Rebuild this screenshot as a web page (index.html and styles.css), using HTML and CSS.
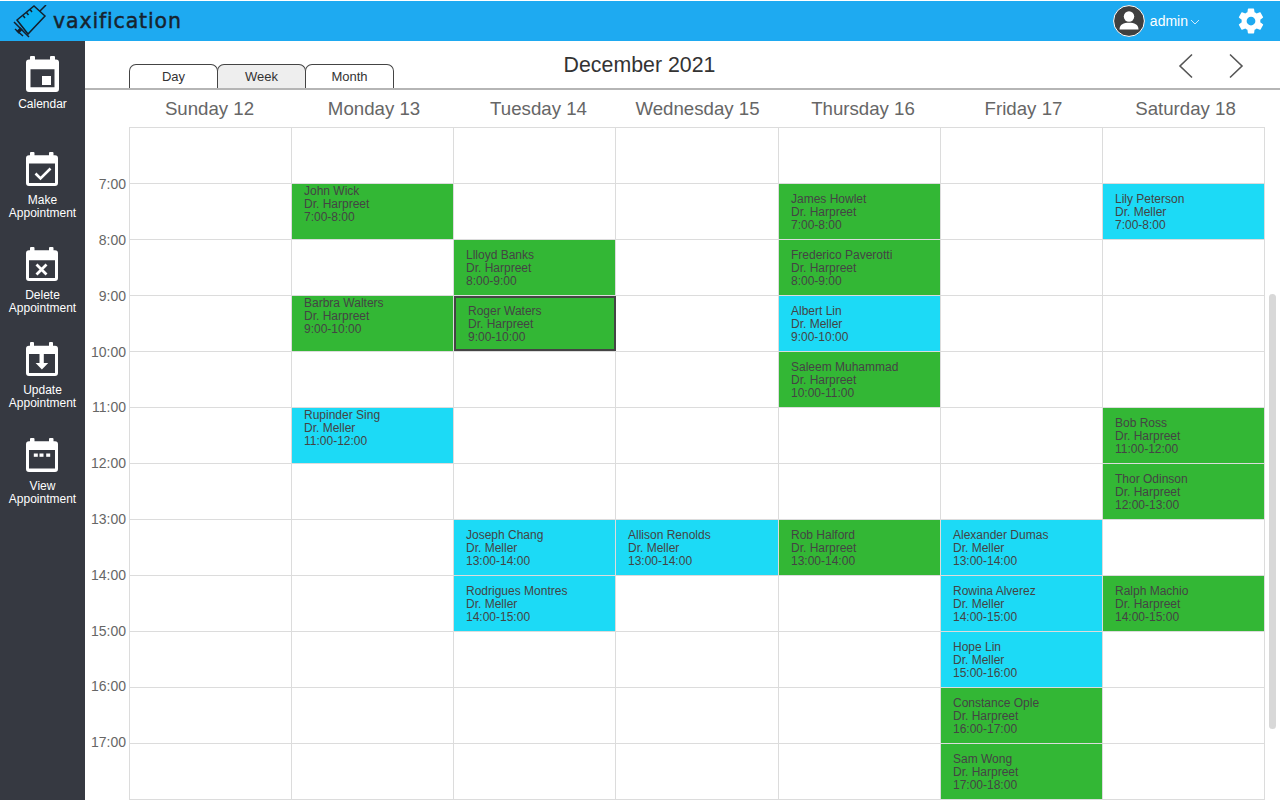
FILE: index.html
```html
<!DOCTYPE html>
<html lang="en">
<head>
<meta charset="utf-8">
<title>vaxification</title>
<link rel="stylesheet" href="styles.css">
</head>
<body>
<header class="topbar">
  <div class="brand">
    <svg class="logo" viewBox="0 0 34 33" width="34" height="33">
      <path d="M4 15 L21 1 L32 11 L15 29 Z" fill="#0bb0f2" stroke="#14202c" stroke-width="1.500" stroke-linejoin="miter"/>
      <path d="M1 17 L16 32 M2 24 L10 31 M27 6 L33 0 M17 4.500l2 2.500M13.500 7.500l2 2.500M10 10.500l2 2.500" fill="none" stroke="#14202c" stroke-width="1.500"/>
      <path d="M8.500 23.500L4.500 27.500" fill="none" stroke="#14202c" stroke-width="3.200"/>
    </svg>
    <span class="brand-name">vaxification</span>
  </div>
  <div class="user">
    <svg class="avatar" viewBox="0 0 32 32" width="32" height="32">
      <circle cx="16" cy="16" r="15.400" fill="#3f3f3f" stroke="#fff" stroke-width="1"/>
      <circle cx="16" cy="11.500" r="5.200" fill="#fff"/>
      <path d="M6.500 24.500c0-5.200 4.300-6.800 9.500-6.800s9.500 1.600 9.500 6.800z" fill="#fff"/>
    </svg>
    <span class="user-name">admin</span>
    <svg class="caret" viewBox="0 0 10 6" width="10" height="6"><path d="M1 1l4 4 4-4" fill="none" stroke="#cfeafc" stroke-width="1"/></svg>
    <svg class="gear" viewBox="0 0 24 24" width="30" height="30"><path fill="#fff" d="M19.400 13c.05-.33.07-.66.07-1s-.02-.67-.07-1l2.100-1.650c.2-.15.25-.42.120-.64l-2-3.460c-.12-.22-.39-.31-.61-.22l-2.490 1c-.52-.4-1.080-.73-1.690-.98l-.38-2.650A.49.49 0 0 0 14 2h-4c-.25 0-.46.18-.49.420l-.38 2.650c-.61.25-1.170.59-1.690.98l-2.490-1a.5.5 0 0 0-.61.220l-2 3.460c-.13.22-.07.49.120.64L4.570 11c-.04.33-.07.67-.07 1s.03.67.07 1l-2.110 1.650c-.19.15-.25.420-.120.64l2 3.460c.12.220.39.310.61.220l2.490-1c.52.400 1.080.730 1.690.980l.38 2.650c.03.240.24.420.490.420h4c.25 0 .46-.18.49-.42l.38-2.650c.61-.25 1.170-.59 1.690-.98l2.490 1c.23.090.49 0 .61-.22l2-3.460c.13-.22.07-.49-.12-.64zM12 15.500a3.500 3.500 0 1 1 0-7 3.500 3.500 0 0 1 0 7z"/></svg>
  </div>
</header>
<div class="shell">
  <nav class="sidebar">
    <a class="nav-item nav-first">
      <svg class="nav-icon nav-icon-lg" viewBox="0 0 33 36" width="33" height="36"><path class="cal" fill-rule="evenodd" d="M4 3.500V1a1 1 0 0 1 1-1h3a1 1 0 0 1 1 1v2.500h15V1a1 1 0 0 1 1-1h3a1 1 0 0 1 1 1v2.500h1a3 3 0 0 1 3 3V33a3 3 0 0 1-3 3H3a3 3 0 0 1-3-3V6.500a3 3 0 0 1 3-3zM4.500 13.300v18h24v-18z"/><rect class="cal" x="16" y="20" width="9" height="9"/></svg>
      <span>Calendar</span>
    </a>
    <a class="nav-item">
      <svg class="nav-icon" viewBox="0 0 32 35" width="32" height="35"><path class="cal" fill-rule="evenodd" d="M4 3.300V1a1 1 0 0 1 1-1h2.500a1 1 0 0 1 1 1v2.300h14.500V1a1 1 0 0 1 1-1h2.500a1 1 0 0 1 1 1v2.300H29a3 3 0 0 1 3 3V31a3 3 0 0 1-3 3H3a3 3 0 0 1-3-3V6.300a3 3 0 0 1 3-3zM3 11.500V31h26V11.500z"/><path d="M9.500 21.500l5 5 10-10" fill="none" stroke="#fff" stroke-width="2.600"/></svg>
      <span>Make<br>Appointment</span>
    </a>
    <a class="nav-item">
      <svg class="nav-icon" viewBox="0 0 32 35" width="32" height="35"><path class="cal" fill-rule="evenodd" d="M4 3.300V1a1 1 0 0 1 1-1h2.500a1 1 0 0 1 1 1v2.300h14.500V1a1 1 0 0 1 1-1h2.500a1 1 0 0 1 1 1v2.300H29a3 3 0 0 1 3 3V31a3 3 0 0 1-3 3H3a3 3 0 0 1-3-3V6.300a3 3 0 0 1 3-3zM3 13.300V31h26V13.300z"/><path d="M10.500 17.600l10 10M20.500 17.600l-10 10" fill="none" stroke="#fff" stroke-width="2.800"/></svg>
      <span>Delete<br>Appointment</span>
    </a>
    <a class="nav-item">
      <svg class="nav-icon" viewBox="0 0 32 35" width="32" height="35"><path class="cal" fill-rule="evenodd" d="M4 3.800V1a1 1 0 0 1 1-1h2a1 1 0 0 1 1 1v2.800h15V1a1 1 0 0 1 1-1h2a1 1 0 0 1 1 1v2.800h2a3 3 0 0 1 3 3V31a3 3 0 0 1-3 3H3a3 3 0 0 1-3-3V6.800a3 3 0 0 1 3-3zM3 12v19h26V12z"/><path class="cal" d="M13.500 12h4.300v9h4.400l-6.300 6.500-6.300-6.500h3.900z"/></svg>
      <span>Update<br>Appointment</span>
    </a>
    <a class="nav-item">
      <svg class="nav-icon" viewBox="0 0 32 35" width="32" height="35"><path class="cal" fill-rule="evenodd" d="M4 3.300V1a1 1 0 0 1 1-1h2.500a1 1 0 0 1 1 1v2.300h14.500V1a1 1 0 0 1 1-1h2.500a1 1 0 0 1 1 1v2.300H29a3 3 0 0 1 3 3V31a3 3 0 0 1-3 3H3a3 3 0 0 1-3-3V6.300a3 3 0 0 1 3-3zM3 12v18.500h26V12z"/><rect class="cal" x="7.800" y="15.500" width="4" height="3.300"/><rect class="cal" x="13.500" y="15.500" width="4" height="3.300"/><rect class="cal" x="20.200" y="15.500" width="4" height="3.300"/></svg>
      <span>View<br>Appointment</span>
    </a>
  </nav>
  <main class="main">
    <div class="toolbar">
      <div class="tabs">
        <button class="tab">Day</button>
        <button class="tab tab-active">Week</button>
        <button class="tab">Month</button>
      </div>
      <h1 class="month">December 2021</h1>
      <div class="pager">
        <svg viewBox="0 0 16 26" width="16" height="26"><path d="M14 1.500L2 13l12 11.500" fill="none" stroke="#555" stroke-width="1.600"/></svg>
        <svg viewBox="0 0 16 26" width="16" height="26"><path d="M2 1.500L14 13 2 24.500" fill="none" stroke="#555" stroke-width="1.600"/></svg>
      </div>
    </div>
    <div class="days">
      <div>Sunday 12</div><div>Monday 13</div><div>Tuesday 14</div><div>Wednesday 15</div><div>Thursday 16</div><div>Friday 17</div><div>Saturday 18</div>
    </div>
    <div class="schedule">
      <div class="times">
        <div>7:00</div><div>8:00</div><div>9:00</div><div>10:00</div><div>11:00</div><div>12:00</div><div>13:00</div><div>14:00</div><div>15:00</div><div>16:00</div><div>17:00</div>
      </div>
      <div class="grid">
        <div class="ev green top c2 r2">John Wick<br>Dr. Harpreet<br>7:00-8:00</div>
        <div class="ev green c5 r2">James Howlet<br>Dr. Harpreet<br>7:00-8:00</div>
        <div class="ev blue c7 r2">Lily Peterson<br>Dr. Meller<br>7:00-8:00</div>
        <div class="ev green c3 r3">Llloyd Banks<br>Dr. Harpreet<br>8:00-9:00</div>
        <div class="ev green c5 r3">Frederico Paverotti<br>Dr. Harpreet<br>8:00-9:00</div>
        <div class="ev green top c2 r4">Barbra Walters<br>Dr. Harpreet<br>9:00-10:00</div>
        <div class="ev green selected c3 r4">Roger Waters<br>Dr. Harpreet<br>9:00-10:00</div>
        <div class="ev blue c5 r4">Albert Lin<br>Dr. Meller<br>9:00-10:00</div>
        <div class="ev green c5 r5">Saleem Muhammad<br>Dr. Harpreet<br>10:00-11:00</div>
        <div class="ev blue top c2 r6">Rupinder Sing<br>Dr. Meller<br>11:00-12:00</div>
        <div class="ev green c7 r6">Bob Ross<br>Dr. Harpreet<br>11:00-12:00</div>
        <div class="ev green c7 r7">Thor Odinson<br>Dr. Harpreet<br>12:00-13:00</div>
        <div class="ev blue c3 r8">Joseph Chang<br>Dr. Meller<br>13:00-14:00</div>
        <div class="ev blue c4 r8">Allison Renolds<br>Dr. Meller<br>13:00-14:00</div>
        <div class="ev green c5 r8">Rob Halford<br>Dr. Harpreet<br>13:00-14:00</div>
        <div class="ev blue c6 r8">Alexander Dumas<br>Dr. Meller<br>13:00-14:00</div>
        <div class="ev blue c3 r9">Rodrigues Montres<br>Dr. Meller<br>14:00-15:00</div>
        <div class="ev blue c6 r9">Rowina Alverez<br>Dr. Meller<br>14:00-15:00</div>
        <div class="ev green c7 r9">Ralph Machio<br>Dr. Harpreet<br>14:00-15:00</div>
        <div class="ev blue c6 r10">Hope Lin<br>Dr. Meller<br>15:00-16:00</div>
        <div class="ev green c6 r11">Constance Ople<br>Dr. Harpreet<br>16:00-17:00</div>
        <div class="ev green c6 r12">Sam Wong<br>Dr. Harpreet<br>17:00-18:00</div>
      </div>
    </div>
    <div class="scrollbar"></div>
  </main>
</div>
</body>
</html>
```
FILE: styles.css
```css
* { box-sizing: border-box; }
html, body { margin: 0; height: 100%; overflow: hidden; }
body { font-family: "Liberation Sans", Arial, sans-serif; background: #fff; padding-top: 1px; }

.topbar { height: 40px; background: #1eaaf1; display: flex; align-items: center; justify-content: space-between; }
.brand { display: flex; align-items: center; padding-left: 13px; }
.logo { display: block; margin-top: 1px; }
.brand-name { margin-left: 6px; font-family: "DejaVu Sans", sans-serif; font-size: 20.5px; letter-spacing: 0.85px; color: #17232e; -webkit-text-stroke: 0.45px #17232e; }
.user { display: flex; align-items: center; padding-right: 14px; }
.avatar { display: block; }
.user-name { margin-left: 5px; font-size: 14px; color: #fff; }
.caret { margin-left: 2px; margin-top: 2px; }
.gear { margin-left: 36px; display: block; }

.shell { display: flex; height: 759px; }
.sidebar { width: 85px; flex: none; background: #363941; display: flex; flex-direction: column; align-items: center; padding-top: 15px; }
.nav-item { display: flex; flex-direction: column; align-items: center; color: #fff; font-size: 12px; line-height: 13px; text-align: center; margin-bottom: 27.2px; }
.nav-first { margin-bottom: 41px; }
.nav-icon { display: block; margin-bottom: 7px; }
.nav-icon-lg { margin-bottom: 6px; }
.cal { fill: #fff; }

.main { flex: 1; position: relative; min-width: 0; }
.toolbar { height: 49px; border-bottom: 2px solid #b5b5b5; padding-left: 44px; display: flex; align-items: flex-end; position: relative; }
.tabs { display: flex; }
.tab { width: 89px; height: 24px; padding: 0; margin: 0 -1px 0 0; background: #fff; border: 1px solid #444; border-bottom: 0; border-radius: 7px 7px 0 0; font: 13px "Liberation Sans", Arial, sans-serif; color: #333; }
.tab-active { background: #eee; }
.month { position: absolute; left: 0; right: 86px; top: 11px; margin: 0; text-align: center; font-size: 21.33px; line-height: 26px; font-weight: 400; color: #333; }
.pager { position: absolute; right: 36px; top: 12px; display: flex; gap: 34px; }
.pager svg { display: block; }

.days { margin-left: 44px; display: grid; grid-template-columns: 161px 168px 161px 157px 174px 147px 177px; height: 37px; align-items: center; text-align: center; font-size: 18.67px; color: #666; }

.schedule { display: flex; }
.times { width: 44px; flex: none; padding-top: 29.3px; font-size: 14px; color: #666; text-align: right; padding-right: 3px; }
.times div { height: 55.8px; line-height: 56px; }

.grid { --line: linear-gradient(#dcdcdc, #dcdcdc); width: 1136px; height: 673px; display: grid; grid-template-columns: 162px 162px 162px 163px 162px 162px 161px; grid-template-rows: repeat(12, 56px); border: solid #dcdcdc; border-width: 1px 1px 0 1px;
  background-color: #fff;
  background-image: var(--line), var(--line), var(--line), var(--line), var(--line), var(--line), linear-gradient(#dcdcdc 1px, transparent 1px);
  background-repeat: no-repeat, no-repeat, no-repeat, no-repeat, no-repeat, no-repeat, repeat-y;
  background-size: 1px 100%, 1px 100%, 1px 100%, 1px 100%, 1px 100%, 1px 100%, 100% 56px;
  background-position: 161px 0, 323px 0, 485px 0, 648px 0, 810px 0, 972px 0, 0 -1px; }

.ev { padding: 9px 0 0 12px; font-size: 12px; line-height: 13px; color: #444; margin: 0 1px 1px 0; }
.top { padding-top: 1px; }
.green { background: #33b735; }
.blue { background: #1cdaf6; }
.selected { border: 2px solid #444; padding: 7px 0 0 12px; margin: 0 0 1px 0; }
.c2 { grid-column: 2; } .c3 { grid-column: 3; } .c4 { grid-column: 4; } .c5 { grid-column: 5; } .c6 { grid-column: 6; } .c7 { grid-column: 7; margin-right: 0; }
.r2 { grid-row: 2; } .r3 { grid-row: 3; } .r4 { grid-row: 4; } .r5 { grid-row: 5; } .r6 { grid-row: 6; } .r7 { grid-row: 7; } .r8 { grid-row: 8; } .r9 { grid-row: 9; } .r10 { grid-row: 10; } .r11 { grid-row: 11; } .r12 { grid-row: 12; }

.scrollbar { position: absolute; left: 1184px; top: 253px; width: 7px; height: 435px; background: #d8d8d8; border-radius: 4px; }
```
